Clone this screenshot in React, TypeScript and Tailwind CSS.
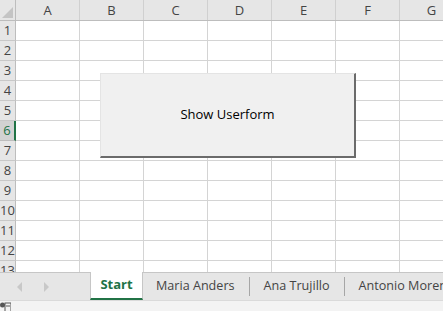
import React from "react";

const cols = ["A", "B", "C", "D", "E", "F", "G"];
const rows = [1, 2, 3, 4, 5, 6, 7, 8, 9, 10, 11, 12, 13];
const tabs = ["Maria Anders", "Ana Trujillo", "Antonio Moreno"];

export default function App() {
  return (
    <div className="w-[443px] h-[311px] overflow-hidden flex flex-col bg-white text-[#444] font-['Open_Sans',sans-serif]">
      {/* Grid */}
      <div className="relative h-[272px] overflow-hidden flex-none">
        <div className="flex h-[21px] bg-[#e6e6e6] border-b border-[#bdbdbd]">
          <div className="w-[16px] flex-none border-r border-[#bdbdbd] relative">
            <div className="absolute right-[2px] bottom-[2px] w-0 h-0 border-l-[11px] border-l-transparent border-b-[11px] border-b-[#c4c4c4]" />
          </div>
          {cols.map((c) => (
            <div
              key={c}
              className="w-[64px] flex-none flex items-center justify-center border-r border-[#d0d0d0] text-[13px] leading-none"
            >
              {c}
            </div>
          ))}
        </div>
        {rows.map((r) => (
          <div key={r} className="flex h-[20px]">
            <div
              className={
                r === 6
                  ? "w-[16px] flex-none bg-[#d2d2d2] border-r-2 border-[#217346] border-b border-b-[#bdbdbd] text-[#217346] text-[13px] flex items-center justify-center leading-none"
                  : "w-[16px] flex-none bg-[#e6e6e6] border-r border-[#bdbdbd] border-b border-b-[#c8c8c8] text-[13px] flex items-center justify-center leading-none"
              }
            >
              <span className="whitespace-nowrap">{r}</span>
            </div>
            {cols.map((c) => (
              <div key={c} className="w-[64px] flex-none border-r border-b border-[#d4d4d4]" />
            ))}
          </div>
        ))}

        {/* Form control button */}
        <div className="absolute left-[100px] top-[73px] w-[256px] h-[85px] bg-[#f0f0f0] border-r-2 border-b-2 border-[#6b6b6b] border-t border-l border-t-[#e4e4e4] border-l-[#e4e4e4] flex items-center justify-center text-[13px] text-black">
          Show Userform
        </div>
      </div>

      {/* Sheet tabs */}
      <div className="h-[28px] flex-none flex bg-[#e6e6e6] border-t border-[#c6c6c6]">
        <div className="w-[90px] flex-none flex items-center pl-[17px] gap-[22px]">
          <div className="w-0 h-0 border-y-[5px] border-y-transparent border-r-[5px] border-r-[#c8c8c8]" />
          <div className="w-0 h-0 border-y-[5px] border-y-transparent border-l-[5px] border-l-[#c8c8c8]" />
        </div>
        <div className="w-[53px] flex-none -mt-px bg-white border-x border-[#c6c6c6] border-b-2 border-b-[#217346] flex items-center justify-center text-[13px] font-bold text-[#217346]">
          Start
        </div>
        <div className="flex items-center text-[12.6px] text-[#444] whitespace-nowrap">
          {tabs.map((t, i) => (
            <React.Fragment key={t}>
              {i > 0 && <div className="w-px h-[19px] bg-[#a6a6a6] mx-[14px]" />}
              <span className={i === 0 ? "pl-[13px]" : ""}>{t}</span>
            </React.Fragment>
          ))}
        </div>
      </div>

      {/* Status bar */}
      <div className="flex-1 bg-[#f3f3f3] border-t border-[#dadada] flex items-start pt-[1px]">
        <svg width="11" height="10" viewBox="0 0 11 10">
          <circle cx="2.5" cy="3" r="2.5" fill="#555" />
          <rect x="5" y="1" width="6" height="9" fill="none" stroke="#555" strokeWidth="1" />
          <line x1="6" y1="4" x2="10" y2="4" stroke="#555" />
        </svg>
      </div>
    </div>
  );
}
